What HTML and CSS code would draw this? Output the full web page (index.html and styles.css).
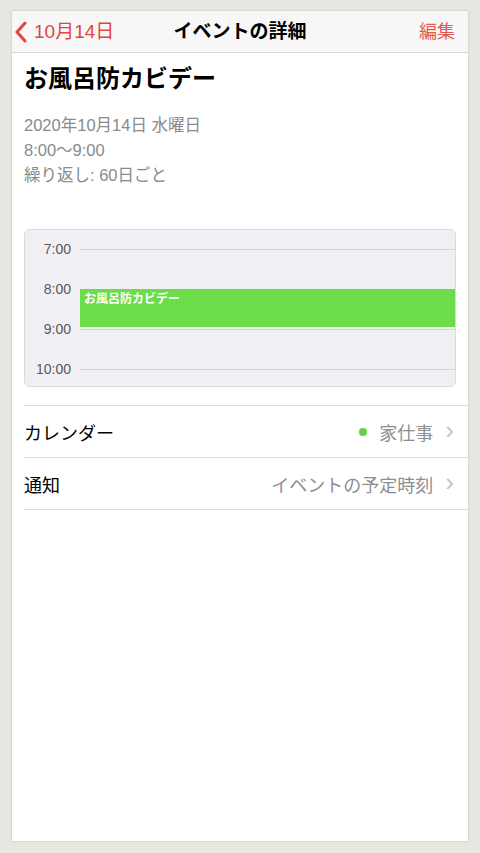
FILE: index.html
```html
<!DOCTYPE html>
<html lang="ja">
<head>
    <meta charset="UTF-8">
    <meta name="viewport" content="width=device-width, initial-scale=1.0">
    <title>イベントの詳細</title>
    <link rel="stylesheet" href="styles.css">
</head>
<body>
    <div class="screen">
        <!-- ナビゲーションバー -->
        <div class="nav">
            <div class="nav-back">
                <svg class="back-icon" width="12" height="22" viewBox="0 0 12 22">
                    <path d="M10 2 L2 11 L10 20" fill="none" stroke="#e0463e" stroke-width="3" stroke-linecap="round" stroke-linejoin="round"/>
                </svg>
                <span>10月14日</span>
            </div>
            <div class="nav-title">イベントの詳細</div>
            <div class="nav-edit">編集</div>
        </div>

        <div class="content">
            <h1 class="event-title">お風呂防カビデー</h1>

            <div class="event-info">
                <div>2020年10月14日 水曜日</div>
                <div>8:00〜9:00</div>
                <div>繰り返し: 60日ごと</div>
            </div>

            <!-- タイムライン -->
            <div class="timeline">
                <div class="hour"><span class="hour-label">7:00</span><span class="hour-line"></span></div>
                <div class="hour"><span class="hour-label">8:00</span><span class="hour-line"></span></div>
                <div class="hour"><span class="hour-label">9:00</span><span class="hour-line"></span></div>
                <div class="hour"><span class="hour-label">10:00</span><span class="hour-line"></span></div>
                <div class="event-block">お風呂防カビデー</div>
            </div>

            <!-- 設定行 -->
            <div class="rows">
                <div class="row">
                    <span class="row-label">カレンダー</span>
                    <span class="row-value"><span class="dot"></span>家仕事<span class="chevron">›</span></span>
                </div>
                <div class="row">
                    <span class="row-label">通知</span>
                    <span class="row-value">イベントの予定時刻<span class="chevron">›</span></span>
                </div>
            </div>
        </div>
    </div>
</body>
</html>
```

FILE: styles.css
```css
body {
    margin: 0;
    padding: 11px 12px 12px;
    background-color: #e7e6e1;
    font-family: "Liberation Sans", "Noto Sans CJK JP", sans-serif;
    color: #000;
}

.screen {
    width: 456px;
    height: 830px;
    background: #fff;
    box-shadow: 0 0 2px rgba(0, 0, 0, 0.18);
    overflow: hidden;
}

/* ナビゲーション */
.nav {
    height: 41px;
    background: #f7f7f7;
    border-bottom: 1px solid #d8d8d8;
    display: flex;
    align-items: center;
    justify-content: space-between;
    padding: 0 13px 0 3px;
    position: relative;
}

.nav-back {
    display: flex;
    align-items: center;
    gap: 7px;
    color: #e0463e;
    font-size: 19px;
    line-height: 24px;
}

.back-icon {
    display: block;
}

.nav-title {
    position: absolute;
    left: 0;
    right: 0;
    text-align: center;
    font-size: 19px;
    font-weight: bold;
    line-height: 24px;
    pointer-events: none;
}

.nav-edit {
    color: #e05a54;
    font-size: 18px;
    line-height: 24px;
}

/* 本文 */
.content {
    padding-left: 12px;
}

.event-title {
    margin: 11px 0 0;
    font-size: 24px;
    line-height: 30px;
    font-weight: bold;
}

.event-info {
    margin-top: 19px;
    color: #8a8a8e;
    font-size: 16.5px;
    line-height: 25px;
}

/* タイムライン */
.timeline {
    position: relative;
    margin: 41px 12px 0 0;
    height: 158px;
    padding-top: 10px;
    box-sizing: border-box;
    background: #f0eff4;
    border: 1px solid #d9d8dd;
    border-radius: 6px;
}

.hour {
    display: flex;
    align-items: center;
    height: 18px;
}

.hour + .hour {
    height: 40px;
    padding-top: 22px;
    box-sizing: border-box;
}

.hour-label {
    width: 46px;
    text-align: right;
    color: #58585c;
    font-size: 14px;
    line-height: 18px;
}

.hour-line {
    flex: 1;
    height: 1px;
    margin-left: 8px;
    background: #d4d3d8;
}

.event-block {
    position: absolute;
    left: 55px;
    right: 0;
    top: 59px;
    height: 38px;
    background: #6cdc4a;
    color: #fff;
    font-size: 12px;
    font-weight: bold;
    line-height: 14px;
    padding: 2px 4px;
    box-sizing: border-box;
    font-family: "Noto Sans CJK JP", sans-serif;
}

/* 設定行 */
.rows {
    margin-top: 18px;
    border-top: 1px solid #dcdcdc;
}

.row {
    height: 52px;
    display: flex;
    align-items: center;
    justify-content: space-between;
    border-bottom: 1px solid #dcdcdc;
    box-sizing: border-box;
    padding-right: 14px;
    font-size: 18px;
}

.row-value {
    display: flex;
    align-items: center;
    color: #8e8e93;
}

.dot {
    width: 8px;
    height: 8px;
    border-radius: 50%;
    background: #5fd03f;
    margin-right: 12px;
}

.chevron {
    color: #c4c4c7;
    font-size: 26px;
    line-height: 20px;
    margin-left: 12px;
    margin-top: -3px;
}
```
